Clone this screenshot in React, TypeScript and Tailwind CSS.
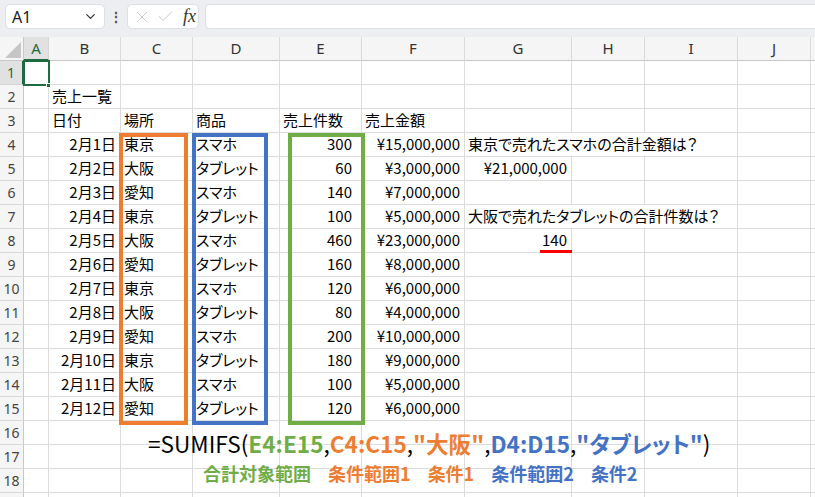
import { ChevronDown, X, Check } from "lucide-react";

const COLS = ["A", "B", "C", "D", "E", "F", "G", "H", "I", "J", "K"];

type Cell = { text: string; align?: "left" | "right"; span?: number };

const dates = Array.from({ length: 12 }, (_, i) => `2月${i + 1}日`);
const places = ["東京", "大阪", "愛知"];
const products = ["スマホ", "タブレット"];
const counts = [300, 60, 140, 100, 460, 160, 120, 80, 200, 180, 100, 120];
const amounts = [
  "¥15,000,000",
  "¥3,000,000",
  "¥7,000,000",
  "¥5,000,000",
  "¥23,000,000",
  "¥8,000,000",
  "¥6,000,000",
  "¥4,000,000",
  "¥10,000,000",
  "¥9,000,000",
  "¥5,000,000",
  "¥6,000,000",
];

function buildSheet() {
  const sheet: Record<string, Cell> = {};
  sheet["B2"] = { text: "売上一覧" };
  sheet["B3"] = { text: "日付" };
  sheet["C3"] = { text: "場所" };
  sheet["D3"] = { text: "商品" };
  sheet["E3"] = { text: "売上件数" };
  sheet["F3"] = { text: "売上金額" };
  dates.forEach((d, i) => {
    const r = i + 4;
    sheet[`B${r}`] = { text: d, align: "right" };
    sheet[`C${r}`] = { text: places[i % 3] };
    sheet[`D${r}`] = { text: products[i % 2] };
    sheet[`E${r}`] = { text: String(counts[i]), align: "right" };
    sheet[`F${r}`] = { text: amounts[i], align: "right" };
  });
  sheet["G4"] = { text: "東京で売れたスマホの合計金額は？", span: 3 };
  sheet["G5"] = { text: "¥21,000,000", align: "right" };
  sheet["G7"] = { text: "大阪で売れたタブレットの合計件数は？", span: 3 };
  sheet["G8"] = { text: "140", align: "right" };
  return sheet;
}

const sheet = buildSheet();
// row 19 only peeks in at the bottom edge, so it gets no number
const ROWS = Array.from({ length: 19 }, (_, i) => i + 1);

function Toolbar() {
  return (
    <div className="flex h-[37px] items-start bg-[#eceef1] pt-[4px]">
      <div className="ml-[5px] flex h-[25px] w-[100px] items-center justify-between rounded-[5px] border border-[#dcdfe3] bg-white pl-[6px] pr-[6px]">
        <span className="text-[16px] text-[#222]">A1</span>
        <ChevronDown size={15} strokeWidth={2} className="text-[#333]" />
      </div>
      <div className="flex h-[25px] w-[22px] items-center justify-center text-[14px] font-bold text-[#555]">
        ⋮
      </div>
      <div className="flex h-[25px] w-[72px] items-center gap-[5px] rounded-[5px] border border-[#dcdfe3] bg-white pl-[5px]">
        <X size={18} strokeWidth={1} className="text-[#b8b8b8]" />
        <Check size={19} strokeWidth={1} className="text-[#b8b8b8]" />
        <span className="ml-[3px] font-['Liberation_Serif',serif] text-[18px] italic text-[#333]">fx</span>
      </div>
      <div className="ml-[6px] h-[25px] flex-1 rounded-l-[5px] border border-r-0 border-[#dcdfe3] bg-white" />
    </div>
  );
}

function Sheet() {
  const cells: JSX.Element[] = [];
  cells.push(
    <div key="corner" className="relative h-[24px] border-b border-r border-[#c8c8c8] bg-[#f5f5f5]">
      <svg className="absolute bottom-[2px] right-[2px]" width="16" height="16" viewBox="0 0 16 16">
        <polygon points="16,0 16,16 0,16" fill="#c6c6c6" />
      </svg>
    </div>
  );
  COLS.forEach((c) => {
    const sel = c === "A";
    cells.push(
      <div
        key={`h${c}`}
        className={
          sel
            ? "flex h-[24px] items-center justify-center border-b-2 border-r border-b-[#1e6b41] border-r-[#d4d4d4] bg-[#e1e1e1] text-[15px] text-[#1e6b41]"
            : "flex h-[24px] items-center justify-center border-b border-r border-b-[#c8c8c8] border-r-[#dadada] bg-[#f5f5f5] text-[15px] text-[#333]"
        }
      >
        {c === "K" ? "" : c}
      </div>
    );
  });
  ROWS.forEach((r) => {
    const sel = r === 1;
    cells.push(
      <div
        key={`r${r}`}
        className={
          sel
            ? "flex h-[24px] items-center justify-center border-b border-r-2 border-b-[#d4d4d4] border-r-[#1e6b41] bg-[#e1e1e1] text-[14px] text-[#1e6b41]"
            : "flex h-[24px] items-center justify-center border-b border-r border-b-[#dadada] border-r-[#c8c8c8] bg-[#f5f5f5] text-[14px] text-[#444]"
        }
      >
        {r === 19 ? "" : r}
      </div>
    );
    let skip = 0;
    COLS.forEach((c) => {
      if (skip > 0) {
        skip--;
        return;
      }
      const cell = sheet[`${c}${r}`];
      const span = cell?.span ?? 1;
      skip = span - 1;
      const padRight = c === "E" ? "pr-[9px]" : "pr-[4px]";
      cells.push(
        <div
          key={`${c}${r}`}
          style={span > 1 ? { gridColumn: `span ${span} / span ${span}` } : undefined}
          className={`flex h-[24px] items-center overflow-visible whitespace-nowrap border-b border-r border-[#dcdcdc] bg-white pl-[3px] ${padRight} font-['Noto_Sans_CJK_JP',sans-serif] text-[15px] text-black [font-feature-settings:'palt'] ${
            cell?.align === "right" ? "justify-end" : "justify-start"
          }`}
        >
          {cell?.text ?? ""}
        </div>
      );
    });
  });

  return (
    <div className="grid grid-cols-[24px_25px_72px_72px_87px_82px_103px_107px_73px_93px_73px_1fr] font-['Noto_Sans',sans-serif]">
      {cells}
    </div>
  );
}

function Overlays() {
  return (
    <>
      {/* selected A1 */}
      <div className="absolute left-[23px] top-[60px] h-[26px] w-[27px] border-2 border-[#1e6b41]" />
      <div className="absolute left-[46px] top-[83px] h-[5px] w-[5px] border border-white bg-[#1e6b41]" />

      {/* highlight ranges */}
      <div className="absolute left-[119px] top-[133px] h-[292px] w-[69px] border-4 border-[#ed7d31]" />
      <div className="absolute left-[192px] top-[133px] h-[292px] w-[76px] border-4 border-[#4472c4]" />
      <div className="absolute left-[288px] top-[133px] h-[292px] w-[77px] border-4 border-[#70ad47]" />

      {/* answer underline */}
      <div className="absolute left-[540px] top-[250px] h-[3px] w-[32px] bg-[#ff0000]" />

      {/* formula */}
      <div className="absolute left-[148px] top-[427px] flex h-[34px] items-center whitespace-nowrap font-['Noto_Sans_CJK_JP',sans-serif] text-[22.6px] leading-none text-black [font-feature-settings:'palt']">
        <span>=SUMIFS(</span>
        <span className="font-bold text-[#70ad47]">E4:E15</span>
        <span>,</span>
        <span className="font-bold text-[#ed7d31]">C4:C15</span>
        <span>,</span>
        <span className="font-bold text-[#ed7d31]">"大阪"</span>
        <span>,</span>
        <span className="font-bold text-[#4472c4]">D4:D15</span>
        <span>,</span>
        <span className="font-bold text-[#4472c4]">"タブレット"</span>
        <span>)</span>
      </div>

      {/* labels */}
      <div className="absolute left-[203px] top-[461px] flex h-[24px] items-center gap-[17px] whitespace-nowrap font-['Noto_Sans_CJK_JP',sans-serif] text-[18px] font-bold leading-none">
        <span className="text-[#70ad47]">合計対象範囲</span>
        <span className="text-[#ed7d31]">条件範囲1</span>
        <span className="text-[#ed7d31]">条件1</span>
        <span className="text-[#4472c4]">条件範囲2</span>
        <span className="text-[#4472c4]">条件2</span>
      </div>
    </>
  );
}

export default function App() {
  return (
    <div className="relative h-[497px] w-[815px] overflow-hidden bg-white">
      <Toolbar />
      <Sheet />
      <Overlays />
    </div>
  );
}
